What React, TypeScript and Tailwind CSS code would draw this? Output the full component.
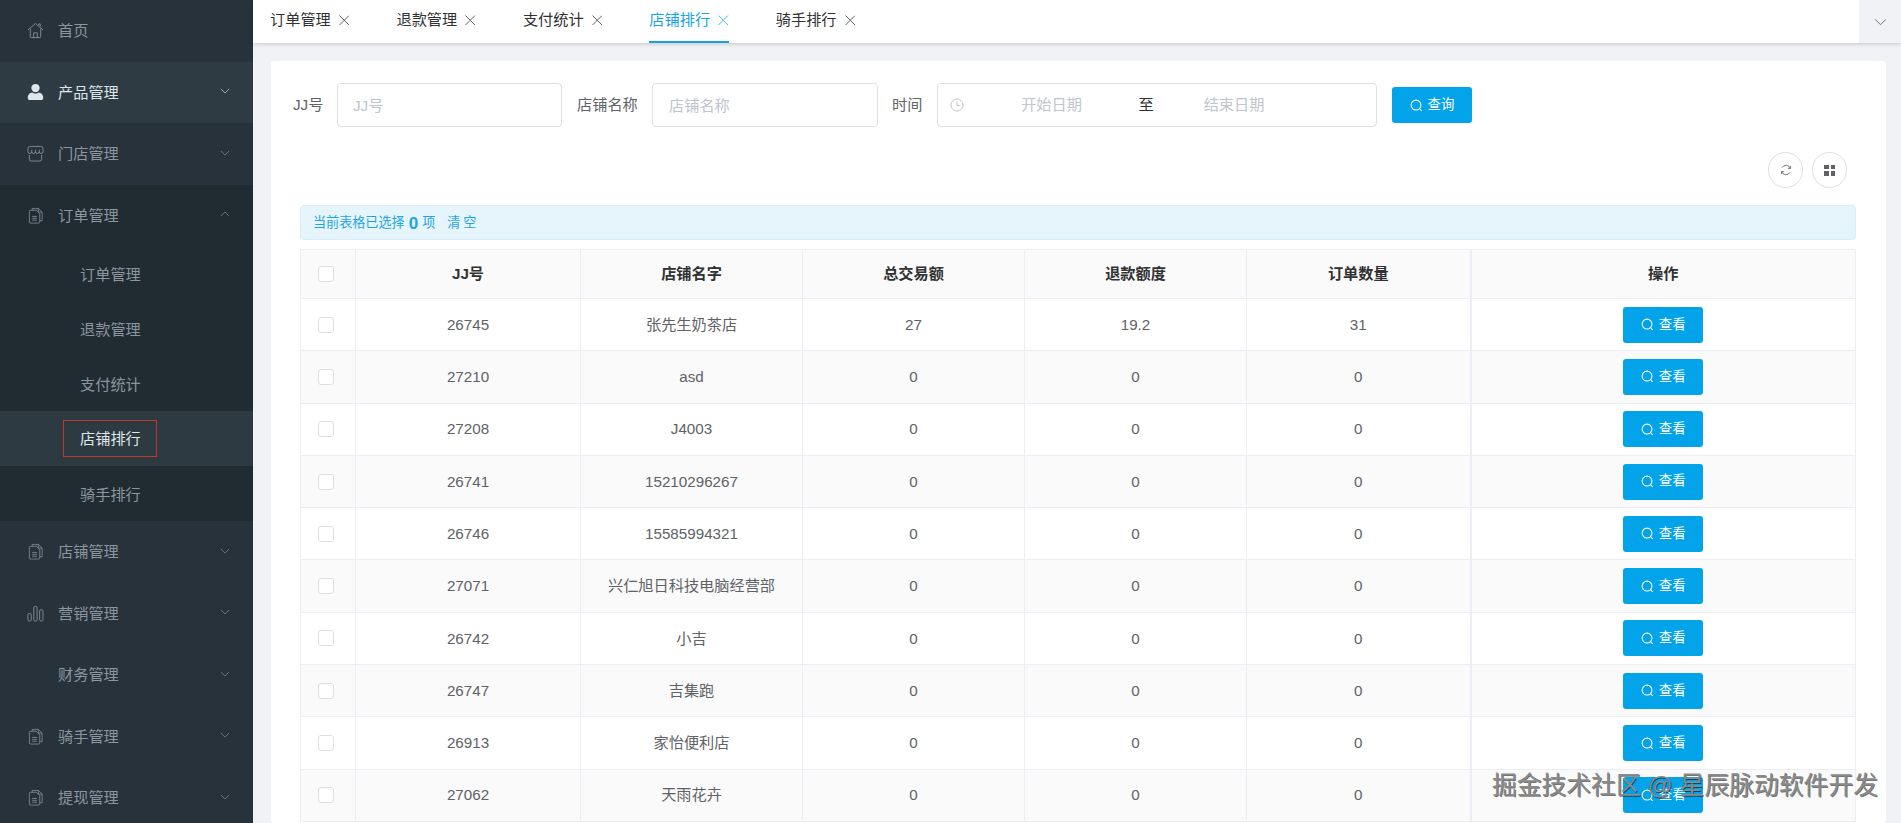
import React from 'react';

const chevron = (up: boolean, cls: string) => (
  <svg viewBox="0 0 12 7" fill="none" stroke="currentColor" strokeWidth="0.800" className={cls}>
    <path d={up ? 'M1 6l5-5 5 5' : 'M1 1l5 5 5-5'} />
  </svg>
);

const HomeIcon = () => (
  <svg viewBox="0 0 18 18" fill="none" stroke="currentColor" strokeWidth="0.900" className="w-[17px] h-[17px]">
    <path d="M1 8.500 9 1.500l8 7M3.500 7v8.500a1 1 0 0 0 1 1h9a1 1 0 0 0 1-1V7M7 16.500v-5h4v5M12.500 3.500V2h1.500v3" />
  </svg>
);

const UserIcon = () => (
  <svg viewBox="0 0 18 18" fill="currentColor" className="w-[17px] h-[18px]">
    <circle cx="9" cy="4.800" r="4.400" />
    <path d="M.8 15.200c0-3.600 2.600-5.400 4.600-5.600 1 .8 2.200 1.200 3.600 1.200s2.600-.4 3.600-1.200c2 .2 4.600 2 4.600 5.600 0 1.800-1 2.400-2 2.400H2.800c-1 0-2-.6-2-2.400z" />
  </svg>
);

const ShopIcon = () => (
  <svg viewBox="0 0 18 18" fill="none" stroke="currentColor" strokeWidth="0.900" className="w-[17px] h-[17px]">
    <path d="M3.500 1.500h11a2.500 2.500 0 0 1 2.500 2.500v3a2 2 0 0 1-4 0 2 2 0 0 1-4 0 2 2 0 0 1-4 0 2 2 0 0 1-4 0V4a2.500 2.500 0 0 1 2.500-2.500z" />
    <path d="M2.500 10.500v4.500a2 2 0 0 0 2 2h9a2 2 0 0 0 2-2v-4.500M5 5v2M9 5v2M13 5v2" />
  </svg>
);

const FileIcon = () => (
  <svg viewBox="0 0 18 18" fill="none" stroke="currentColor" strokeWidth="0.800" className="w-[17px] h-[17px]">
    <path d="M5.500 3.500V1.500h6.500l4 4V14.500h-2.500" />
    <path d="M12 1.500v4h4" />
    <path d="M2.500 4.500a1 1 0 0 1 1-1h6.500l3.500 3.500v9a1 1 0 0 1-1 1h-9a1 1 0 0 1-1-1z" />
    <path d="M5.500 10h5M5.500 12h5M5.500 14h5" />
  </svg>
);

const BarsIcon = () => (
  <svg viewBox="0 0 18 18" fill="none" stroke="currentColor" strokeWidth="0.900" className="w-[17px] h-[17px]">
    <rect x="1" y="9" width="3.500" height="8" rx="1.500" />
    <rect x="7.200" y="1.500" width="3.500" height="15.500" rx="1.500" />
    <rect x="13.400" y="5" width="3.500" height="12" rx="1.500" />
  </svg>
);

const SearchIcon = ({ cls }: { cls: string }) => (
  <svg viewBox="0 0 14 14" fill="none" stroke="currentColor" strokeWidth="1.100" className={cls}>
    <circle cx="6.500" cy="6.500" r="5.300" />
    <path d="M10.300 10.300l2.200 2.500" />
  </svg>
);

const menus = [
  { label: '首页', icon: <HomeIcon />, arrow: false },
  { label: '产品管理', icon: <UserIcon />, arrow: true, active: true },
  { label: '门店管理', icon: <ShopIcon />, arrow: true },
];

const menusAfter = [
  { label: '店铺管理', icon: <FileIcon /> },
  { label: '营销管理', icon: <BarsIcon /> },
  { label: '财务管理', icon: null },
  { label: '骑手管理', icon: <FileIcon /> },
  { label: '提现管理', icon: <FileIcon /> },
];

const subs = ['订单管理', '退款管理', '支付统计', '店铺排行', '骑手排行'];

const tabs = ['订单管理', '退款管理', '支付统计', '店铺排行', '骑手排行'];

const rows = [
  ['26745', '张先生奶茶店', '27', '19.2', '31'],
  ['27210', 'asd', '0', '0', '0'],
  ['27208', 'J4003', '0', '0', '0'],
  ['26741', '15210296267', '0', '0', '0'],
  ['26746', '15585994321', '0', '0', '0'],
  ['27071', '兴仁旭日科技电脑经营部', '0', '0', '0'],
  ['26742', '小吉', '0', '0', '0'],
  ['26747', '吉集跑', '0', '0', '0'],
  ['26913', '家怡便利店', '0', '0', '0'],
  ['27062', '天雨花卉', '0', '0', '0'],
];

const heads = ['JJ号', '店铺名字', '总交易额', '退款额度', '订单数量'];

const Check = () => <span className="block ml-[17px] w-4 h-4 bg-white border border-[#dcdfe6] rounded-[3px]" />;

const MenuRow = ({ label, icon, arrow = true, open = false, active = false }: { label: string; icon: React.ReactNode; arrow?: boolean; open?: boolean; active?: boolean }) => (
  <div className={`h-[61.5px] flex items-center pl-[27px] pr-[23px] ${active ? 'bg-[#2e3b43] text-[#dfe6ea]' : 'text-[#8a979f]'}`}>
    <span className="w-[17px] flex justify-center shrink-0">{icon}</span>
    <span className="ml-[14px] flex-1 pt-[2px]">{label}</span>
    {arrow && chevron(open, 'w-[10px] h-[6px] -mt-[2px]')}
  </div>
);

export default function App() {
  return (
    <div className="h-screen overflow-hidden flex relative bg-[#f0f2f5] text-[15.2px] font-['Liberation_Sans','Noto_Sans_CJK_SC',sans-serif]">
      <aside className="w-[253px] shrink-0 bg-[#27323a]">
        {menus.map((m) => (
          <MenuRow key={m.label} {...m} />
        ))}
        <div className="bg-[#212b32]">
          <MenuRow label="订单管理" icon={<FileIcon />} open />
          {subs.map((s) => (
            <div key={s} className={`h-[55px] flex items-center ${s === '店铺排行' ? 'bg-[#2e3a42] text-[#dfe6ea] pl-[63px]' : 'text-[#8a979f] pl-[80px] pt-[3px]'}`}>
              {s === '店铺排行' ? <span className="h-[37px] pl-4 pr-[15px] pt-[2px] flex items-center border border-[#c0392b]">{s}</span> : s}
            </div>
          ))}
        </div>
        {menusAfter.map((m) => (
          <MenuRow key={m.label} {...m} />
        ))}
      </aside>

      <main className="flex-1 min-w-0 flex flex-col">
        <div className="h-[43px] shrink-0 bg-white flex shadow-[0_1px_4px_rgba(0,0,0,0.18)] relative">
          <div className="flex-1 flex pl-[17px] gap-[47.200px]">
            {tabs.map((t) => (
              <div key={t} className={`h-full flex items-center gap-2 border-b-2 ${t === '店铺排行' ? 'text-[#14a4e6] border-[#14a4e6]' : 'text-[#303133] border-transparent'}`}>
                <span>{t}</span>
                <svg viewBox="0 0 10 10" stroke="currentColor" strokeWidth="0.900" className="w-[10.500px] h-[10.500px] opacity-80">
                  <path d="M.5.5l9 9M9.500.5l-9 9" />
                </svg>
              </div>
            ))}
          </div>
          <div className="w-[42px] bg-[#f0f2f5] flex items-center justify-center text-[#606266]">
            {chevron(false, 'w-[13px] h-[8px]')}
          </div>
        </div>

        <section className="mt-[18px] ml-[18px] mr-[15px] flex-1 bg-white rounded-[3px] pl-[29px] pr-[30px] pt-[22px] min-h-0 overflow-hidden">
          <div className="flex items-center h-[44px] -ml-[7px] text-[#606266]">
            <label className="w-[44px] shrink-0">JJ号</label>
            <input placeholder="JJ号" className="w-[225px] h-[44px] border border-[#dcdfe6] rounded-[4px] px-[15px] outline-none placeholder:text-[#c0c4cc]" />
            <label className="ml-[15px] w-[75px] shrink-0">店铺名称</label>
            <input placeholder="店铺名称" className="w-[226px] h-[44px] border border-[#dcdfe6] rounded-[4px] px-[16px] outline-none placeholder:text-[#c0c4cc]" />
            <label className="ml-[14px] w-[45px] shrink-0">时间</label>
            <div className="w-[440px] h-[44px] border border-[#dcdfe6] rounded-[4px] flex items-center pl-[12px]">
              <svg viewBox="0 0 14 14" fill="none" stroke="#c0c4cc" strokeWidth="1" className="w-[14px] h-[14px] shrink-0">
                <circle cx="7" cy="7" r="6" />
                <path d="M7 3.500V7.500h3" />
              </svg>
              <input placeholder="开始日期" className="w-[173px] pl-[2px] text-center outline-none placeholder:text-[#c0c4cc]" />
              <span className="w-[18px] text-center text-[#303133]">至</span>
              <input placeholder="结束日期" className="w-[158px] text-center outline-none placeholder:text-[#c0c4cc]" />
            </div>
            <button className="ml-[15px] w-[80px] h-[36px] bg-[#02a3e9] text-white rounded-[3px] flex items-center justify-center gap-[5px] text-[13.400px]">
              <SearchIcon cls="w-[13px] h-[13px]" />
              查询
            </button>
          </div>

          <div className="mt-[25px] flex justify-end gap-[9px] pr-[9px]">
            <span className="w-[35px] h-[36px] rounded-full border border-[#dcdfe6] flex items-center justify-center text-[#606266]">
              <svg viewBox="0 0 14 14" fill="none" stroke="currentColor" strokeWidth="1" className="w-[12px] h-[12px]">
                <path d="M12 5A5.300 5.300 0 0 0 2.400 4.200M2 9a5.300 5.300 0 0 0 9.600.8" />
                <path d="M12.500 2.200 12.200 5.300 9.200 4.900M1.500 11.800 1.800 8.700 4.800 9.100" />
              </svg>
            </span>
            <span className="w-[35px] h-[36px] rounded-full border border-[#dcdfe6] flex items-center justify-center">
              <span className="grid grid-cols-2 gap-[2px]">
                <i className="w-[4.500px] h-[4.500px] bg-[#606266]" />
                <i className="w-[4.500px] h-[4.500px] bg-[#606266]" />
                <i className="w-[4.500px] h-[4.500px] bg-[#606266]" />
                <i className="w-[4.500px] h-[4.500px] bg-[#606266]" />
              </span>
            </span>
          </div>

          <div className="mt-[17px] h-[35px] bg-[#e6f5fc] border border-[#d5eef9] rounded-[4px] pl-[12px] pt-[1px] flex items-center text-[13.100px] text-[#1ea4e6]">
            <span>当前表格已选择</span>
            <b className="mx-[4px] text-[17px] leading-none">0</b>
            <span>项</span>
            <span className="ml-[12px] tracking-[3px]">清空</span>
          </div>

          <table className="mt-[9px] w-[1556px] table-fixed border-collapse text-center text-[#606266]">
            <colgroup>
              <col className="w-[55px]" />
              <col className="w-[225px]" />
              <col className="w-[222px]" />
              <col className="w-[222px]" />
              <col className="w-[222px]" />
              <col className="w-[224px]" />
              <col />
            </colgroup>
            <thead>
              <tr className="h-[49px] bg-[#fafafa] text-[#303133]">
                <th className="border border-[#ebeef5]">
                  <Check />
                </th>
                {heads.map((h) => (
                  <th key={h} className="border border-[#ebeef5] font-bold">
                    {h}
                  </th>
                ))}
                <th className="border border-[#ebeef5] border-l-2 font-bold">操作</th>
              </tr>
            </thead>
            <tbody>
              {rows.map((r, i) => (
                <tr key={r[0]} className={`h-[52.300px] ${i % 2 ? 'bg-[#fafafa]' : 'bg-white'}`}>
                  <td className="border border-[#ebeef5]">
                    <Check />
                  </td>
                  {r.map((c, j) => (
                    <td key={j} className="border border-[#ebeef5] pt-[1px]">
                      {c}
                    </td>
                  ))}
                  <td className="border border-[#ebeef5] border-l-2">
                    <button className="mx-auto w-[80px] h-[36px] bg-[#02a3e9] text-white rounded-[3px] flex items-center justify-center gap-[5px] text-[13.400px]">
                      <SearchIcon cls="w-[13px] h-[13px]" />
                      查看
                    </button>
                  </td>
                </tr>
              ))}
            </tbody>
          </table>
        </section>
      </main>

      <div className="absolute right-[23px] bottom-[22px] text-[24.800px] leading-[30px] text-[#8a8a8a] [text-shadow:1px_1px_0_rgba(0,0,0,0.55)] whitespace-pre">掘金技术社区 @ 星辰脉动软件开发</div>
    </div>
  );
}
